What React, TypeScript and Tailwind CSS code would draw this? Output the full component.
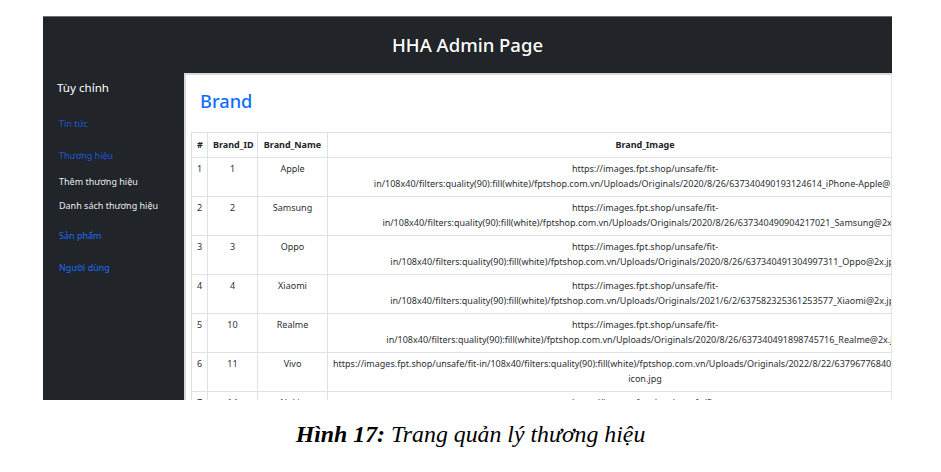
const rows = [
  {
    no: 1,
    id: 1,
    name: 'Apple',
    l1: 'https://images.fpt.shop/unsafe/fit-',
    l2: 'in/108x40/filters:quality(90):fill(white)/fptshop.com.vn/Uploads/Originals/2020/8/26/637340490193124614_iPhone-Apple@2x.jpg',
  },
  {
    no: 2,
    id: 2,
    name: 'Samsung',
    l1: 'https://images.fpt.shop/unsafe/fit-',
    l2: 'in/108x40/filters:quality(90):fill(white)/fptshop.com.vn/Uploads/Originals/2020/8/26/637340490904217021_Samsung@2x.jpg',
  },
  {
    no: 3,
    id: 3,
    name: 'Oppo',
    l1: 'https://images.fpt.shop/unsafe/fit-',
    l2: 'in/108x40/filters:quality(90):fill(white)/fptshop.com.vn/Uploads/Originals/2020/8/26/637340491304997311_Oppo@2x.jpg',
  },
  {
    no: 4,
    id: 4,
    name: 'Xiaomi',
    l1: 'https://images.fpt.shop/unsafe/fit-',
    l2: 'in/108x40/filters:quality(90):fill(white)/fptshop.com.vn/Uploads/Originals/2021/6/2/637582325361253577_Xiaomi@2x.jpg',
  },
  {
    no: 5,
    id: 10,
    name: 'Realme',
    l1: 'https://images.fpt.shop/unsafe/fit-',
    l2: 'in/108x40/filters:quality(90):fill(white)/fptshop.com.vn/Uploads/Originals/2020/8/26/637340491898745716_Realme@2x.jpg',
  },
  {
    no: 6,
    id: 11,
    name: 'Vivo',
    l1: 'https://images.fpt.shop/unsafe/fit-in/108x40/filters:quality(90):fill(white)/fptshop.com.vn/Uploads/Originals/2022/8/22/637967768406215473_vivo-logo-',
    l2: 'icon.jpg',
  },
  {
    no: 7,
    id: 14,
    name: 'Nokia',
    l1: 'https://images.fpt.shop/unsafe/fit-',
    l2: 'in/108x40/filters:quality(90):fill(white)/fptshop.com.vn/Uploads/Originals/2020/8/26/637340492223445233_Nokia@2x.jpg',
  },
];

const cell = 'border border-[#dee2e6] px-[5px] py-[4.6px] text-center align-top';

export default function App() {
  return (
    <div className="w-[941px] h-[472px] bg-white overflow-hidden [font-family:'Noto_Sans',sans-serif]">
      <div className="ml-[43px] mt-[16px] w-[849px] h-[384px] flex flex-col overflow-hidden border-t border-[#6b6e72]">
        <header className="h-[56px] shrink-0 bg-[#212529] flex items-center justify-center">
          <h1 className="text-white text-[18.5px] font-medium">HHA Admin Page</h1>
        </header>

        <div className="flex flex-1 min-h-0">
          <aside className="w-[141px] shrink-0 bg-[#212529] pl-[14px] flex flex-col text-[9px] leading-[14.4px]">
            <div className="mt-[7px] text-white text-[11.6px] leading-[16px]">Tùy chỉnh</div>
            <a className="mt-[21px] ml-[2px] text-[#1d56d6]">Tin tức</a>
            <a className="mt-[17.6px] ml-[2px] text-[#1d56d6]">Thương hiệu</a>
            <a className="mt-[11.6px] ml-[2px] text-[#e9ecef]">Thêm thương hiệu</a>
            <a className="mt-[9.6px] ml-[2px] text-[#e9ecef]">Danh sách thương hiệu</a>
            <a className="mt-[15.6px] ml-[2px] text-[#1a6cf5]">Sản phẩm</a>
            <a className="mt-[17.6px] ml-[2px] text-[#1a6cf5]">Người dùng</a>
          </aside>

          <main className="flex-1 min-w-0 bg-white border-l-2 border-t-2 border-r border-l-[#d6d8da] border-t-[#d6d8da] border-r-[#e4e6e8] pl-[5px] pt-[15px] overflow-hidden">
            <h2 className="pl-[9px] text-[#0d6efd] text-[18.2px] leading-[23px] font-medium">Brand</h2>
            <table className="mt-[19px] table-fixed border-collapse w-[772px] text-[#2b2f33] text-[9px] leading-[14.4px]">
              <thead>
                <tr className="font-bold text-[#212529]">
                  <th className={`${cell} w-[16px] px-[2px]`}>#</th>
                  <th className={`${cell} w-[50px]`}>Brand_ID</th>
                  <th className={`${cell} w-[70px]`}>Brand_Name</th>
                  <th className={cell}>Brand_Image</th>
                </tr>
              </thead>
              <tbody>
                {rows.map((r) => (
                  <tr key={r.no}>
                    <td className={`${cell} px-[2px]`}>{r.no}</td>
                    <td className={cell}>{r.id}</td>
                    <td className={cell}>{r.name}</td>
                    <td className={`${cell} overflow-hidden`}>
                      <span className="block whitespace-nowrap">{r.l1}</span>
                      <span className="block whitespace-nowrap">{r.l2}</span>
                    </td>
                  </tr>
                ))}
              </tbody>
            </table>
          </main>
        </div>
      </div>

      <p className="mt-[21px] text-center text-[23.8px] leading-[27px] text-black [font-family:'Liberation_Serif','Times_New_Roman',serif] italic">
        <span className="font-bold">Hình 17:</span> Trang quản lý thương hiệu
      </p>
    </div>
  );
}
